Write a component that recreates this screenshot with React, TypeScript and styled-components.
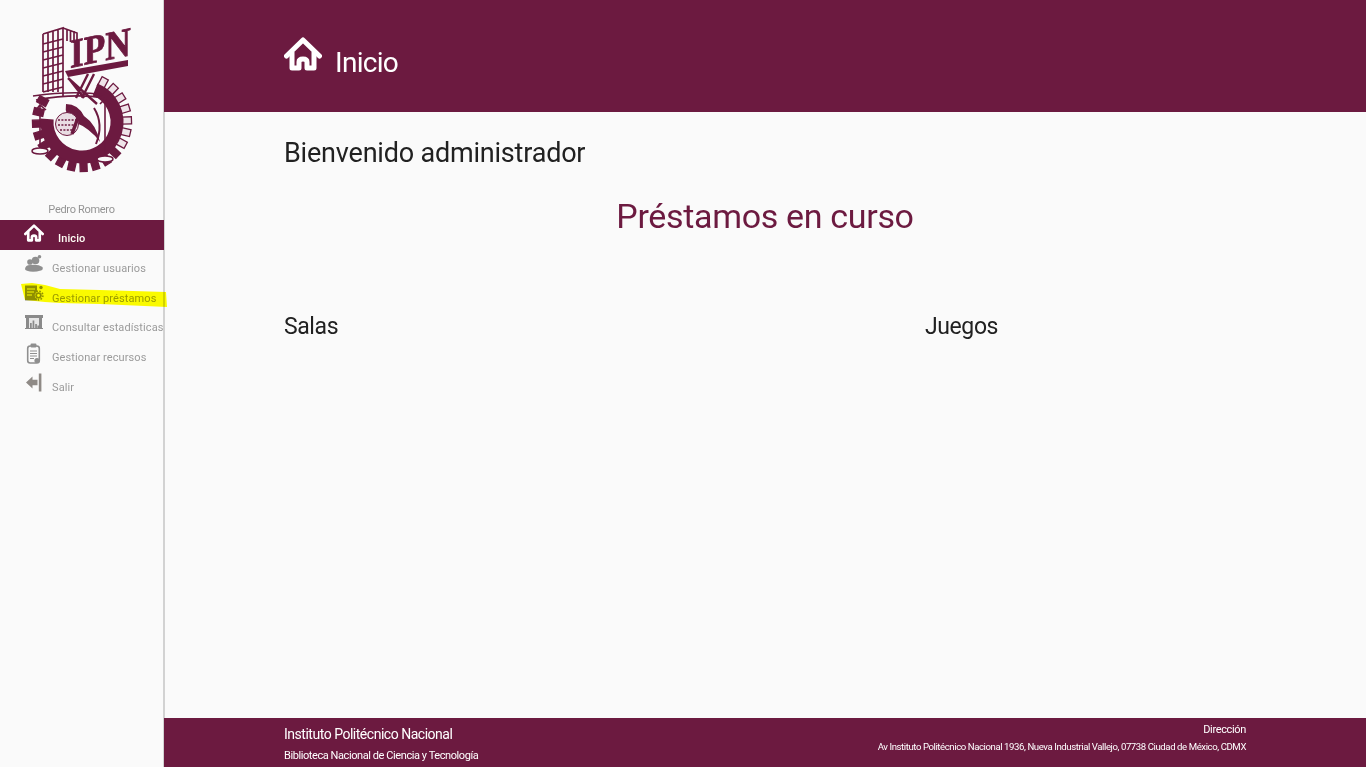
import React from "react";
import styled, { createGlobalStyle } from "styled-components";

const MAROON = "#6c1a40";

const Global = createGlobalStyle`
  html, body { margin: 0; padding: 0; height: 100%; background: #fafafa; }
  #root { height: 100%; }
  * { box-sizing: border-box; }
`;

const Page = styled.div`
  position: relative;
  display: grid;
  grid-template-columns: 165px 1fr;
  width: 100%;
  height: 767px;
  overflow: hidden;
  font-family: Roboto, "Liberation Sans", sans-serif;
  background: #fafafa;
  color: #212121;
`;

const Sidebar = styled.aside`
  display: flex;
  flex-direction: column;
  border-right: 2px solid #d2d2d2;
  background: #fafafa;
`;

const LogoBox = styled.div`
  display: flex;
  justify-content: center;
  height: 202px;
  padding-top: 20px;
  svg { filter: blur(0.35px); }
`;

const UserName = styled.div`
  height: 18px;
  font-size: 11px;
  line-height: 15px;
  letter-spacing: -0.3px;
  text-align: center;
  color: #949494;
`;

const Nav = styled.nav`
  display: flex;
  flex-direction: column;
`;

const NavItem = styled.a<{ $active?: boolean }>`
  display: flex;
  height: 29.8px;
  width: 164px;
  padding-left: 24px;
  background: ${(p) => (p.$active ? MAROON : "transparent")};
  color: ${(p) => (p.$active ? "#fffdf5" : "#9b9b9b")};
  font-size: 11px;
  font-weight: ${(p) => (p.$active ? 500 : 400)};
  letter-spacing: 0.1px;
  white-space: nowrap;
`;

const NavIcon = styled.span<{ $active?: boolean }>`
  display: block;
  width: 20px;
  height: 20px;
  margin-top: 4px;
  margin-right: ${(p) => (p.$active ? "14px" : "8px")};
  svg { display: block; }
`;

const NavLabel = styled.span`
  line-height: 38px;
`;

const Marker = styled.svg`
  position: absolute;
  left: 0;
  top: 280px;
  width: 170px;
  height: 30px;
  mix-blend-mode: multiply;
  pointer-events: none;
`;

const Main = styled.div`
  display: flex;
  flex-direction: column;
  min-width: 0;
`;

const Header = styled.header`
  display: flex;
  align-items: center;
  flex: 0 0 112px;
  margin-left: -1px;
  padding-left: 120px;
  background: ${MAROON};
  color: #fff;
`;

const HeaderIcon = styled.span`
  display: block;
  width: 38px;
  height: 34px;
  margin-right: 13px;
  margin-bottom: 4px;
  svg { display: block; }
`;

const HeaderTitle = styled.h1`
  margin: 14px 0 0;
  font-size: 28px;
  font-weight: 400;
  line-height: 36px;
  letter-spacing: -0.7px;
`;

const Content = styled.main`
  flex: 1;
  padding: 24px 120px 0 119px;
`;

const Welcome = styled.h2`
  margin: 0;
  font-size: 27px;
  font-weight: 400;
  line-height: 34px;
  letter-spacing: -0.2px;
`;

const SectionTitle = styled.h2`
  margin: 25px 0 0;
  font-size: 34px;
  font-weight: 400;
  line-height: 42px;
  letter-spacing: -0.33px;
  text-align: center;
  color: ${MAROON};
`;

const Columns = styled.div`
  display: grid;
  grid-template-columns: 641px 1fr;
  margin-top: 75px;
`;

const ColumnTitle = styled.h3`
  margin: 0;
  font-size: 23px;
  font-weight: 400;
  line-height: 30px;
  letter-spacing: -0.4px;
`;

const Footer = styled.footer`
  display: flex;
  justify-content: space-between;
  flex: 0 0 49px;
  margin-left: -1px;
  padding: 0 120px;
  background: ${MAROON};
  color: #fff;
`;

const FooterLeft = styled.div`
  display: flex;
  flex-direction: column;
`;

const FooterName = styled.div`
  margin-top: 7px;
  font-size: 14px;
  line-height: 18px;
  letter-spacing: -0.48px;
`;

const FooterSub = styled.div`
  margin-top: 5px;
  font-size: 11px;
  line-height: 15px;
  letter-spacing: -0.42px;
`;

const FooterRight = styled.div`
  display: flex;
  flex-direction: column;
  align-items: flex-end;
  font-size: 9.6px;
  line-height: 14px;
`;

const FooterLabel = styled.div`
  margin-top: 5px;
  font-size: 11px;
  letter-spacing: -0.35px;
`;

const FooterAddress = styled.div`
  margin-top: 3px;
  letter-spacing: -0.42px;
`;

const polar = (cx: number, cy: number, r: number, deg: number) => {
  const a = (deg * Math.PI) / 180;
  return [cx + r * Math.cos(a), cy + r * Math.sin(a)];
};

const Logo = () => {
  const cx = 82;
  const cy = 122;
  const teeth = Array.from({ length: 19 }, (_, i) => -62 + i * 15);
  const [sx, sy] = polar(cx, cy, 35, -68);
  const [ex, ey] = polar(cx, cy, 35, 185);
  const hLines = [0, 1, 2, 3, 4, 5, 6];
  return (
    <svg width="110" height="155" viewBox="27 20 110 155" fill="none">
      {teeth.map((d) => {
        const [x, y] = polar(cx, cy, 44.5, d);
        const pale = d < 40;
        return (
          <rect
            key={d}
            x={x - 5}
            y={y - 3.5}
            width="10"
            height="7"
            fill={pale ? "#efe4e9" : MAROON}
            stroke={MAROON}
            strokeWidth="1.3"
            transform={`rotate(${d} ${x} ${y})`}
          />
        );
      })}
      <path d={`M${sx} ${sy} A35 35 0 1 1 ${ex} ${ey}`} stroke={MAROON} strokeWidth="13" />
      <g stroke={MAROON} strokeWidth="1.7">
        <path d="M43 34 L63 28 V96 M43 34 V92 M48 33 V92 M53 31 V92 M58 30 V92" />
        {hLines.map((i) => (
          <path key={i} d={`M43 ${44 + i * 8} L63 ${39 + i * 8}`} />
        ))}
        <path d="M63 28 L77 33 V43 M67 29 V41 M70.5 30 V42 M74 31 V43" />
      </g>
      <text
        transform="translate(70 68) skewY(-12) scale(0.86 1)"
        fontFamily="'Liberation Serif', serif"
        fontWeight="700"
        fontSize="41"
        fill={MAROON}
        stroke={MAROON}
        strokeWidth="0.8"
      >
        IPN
      </text>
      <path d="M65 71 L128 60 V66 L68 77 Z" fill={MAROON} />
      <g stroke={MAROON}>
        <path d="M68 78 L97 104 M94 74 L82 98 M70 80 L84 98 M88 74 L76 98" strokeWidth="2.4" />
        <path d="M33 96 Q75 90 104 95 M36 100 Q75 93 104 98" strokeWidth="1.6" />
        <path d="M40 106 V150 M105 101 V158 M36 110 L40 105 L46 110 M100 104 L105 99 L111 105" strokeWidth="1.6" />
      </g>
      <path d="M66 104 Q78 104 84 116 Q96 124 100 142 Q90 128 74 122 Q64 116 66 104 Z" fill={MAROON} />
      <circle cx="67" cy="124" r="11.5" fill="#e9dde3" stroke={MAROON} strokeWidth="1" />
      <path d="M58 120 H76 M58 125 H76 M60 130 H74" stroke={MAROON} strokeWidth="1.4" strokeDasharray="2 1.4" />
      <path d="M80 112 L72 134" stroke={MAROON} strokeWidth="3.5" />
      <path d="M94 108 Q104 124 96 144" stroke={MAROON} strokeWidth="2" />
      <ellipse cx="40" cy="151" rx="8" ry="3" fill="#fafafa" stroke={MAROON} strokeWidth="1.5" />
      <ellipse cx="105" cy="159" rx="8" ry="3" fill="#fafafa" stroke={MAROON} strokeWidth="1.5" />
    </svg>
  );
};

const HomeShape = ({ w }: { w: number }) => (
  <svg width={w} height={(w * 34) / 38} viewBox="0 0 38 34" fill="none">
    <path d="M2.5 19 L19 3 L35.5 19" stroke="#fff" strokeWidth="5" strokeLinecap="round" strokeLinejoin="round" />
    <path d="M8 15 V31 H15 V25 Q15 22 19 22 Q23 22 23 25 V31 H30 V15" stroke="#fff" strokeWidth="5" strokeLinejoin="round" />
  </svg>
);

const UsersIcon = () => (
  <svg width="20" height="20" viewBox="0 0 20 20" fill="#8f8f8f">
    <circle cx="11.5" cy="6.5" r="3.8" />
    <circle cx="6" cy="8" r="2.8" />
    <circle cx="15.5" cy="2.8" r="1.8" />
    <path d="M1 15 Q1.5 10.8 6.5 11 Q14 10 18.5 13 Q19.5 15.5 17 16.5 Q9 18.8 3 16.8 Q1 16 1 15 Z" />
  </svg>
);

const LoansIcon = () => (
  <svg width="20" height="20" viewBox="0 0 20 20">
    <rect x="1" y="1.5" width="12" height="15" fill="#8f8f8f" />
    <path d="M3 5 H11 M3 8 H10 M3 11 H8" stroke="#fafafa" strokeWidth="1.2" />
    <circle cx="14.5" cy="11.5" r="3.6" fill="#8f8f8f" stroke="#fafafa" strokeWidth="0.6" />
    <circle cx="14.5" cy="11.5" r="4.4" fill="none" stroke="#8f8f8f" strokeWidth="1.6" strokeDasharray="1.6 1.4" />
    <circle cx="14.5" cy="11.5" r="1.4" fill="#fafafa" />
    <circle cx="17" cy="3.5" r="1.7" fill="#8f8f8f" />
  </svg>
);

const StatsIcon = () => (
  <svg width="20" height="20" viewBox="0 0 20 20" fill="#8a8a8a">
    <path d="M1 2 H19 V5 H18 V15 H19 V16 H1 V15 H2 V5 H1 Z" />
    <rect x="5" y="5" width="10" height="10" fill="#e6e6e6" />
    <rect x="6" y="10" width="1.7" height="5" />
    <rect x="8.6" y="7.5" width="1.7" height="7.5" />
    <rect x="11.2" y="11" width="1.7" height="4" />
    <rect x="13.4" y="12.5" width="1.6" height="2.5" />
  </svg>
);

const ClipIcon = () => (
  <svg width="20" height="22" viewBox="0 0 20 22" fill="none" stroke="#8f8f8f">
    <rect x="3.7" y="3" width="11.6" height="17" rx="2.5" strokeWidth="1.6" />
    <rect x="6.5" y="0.5" width="6" height="4" rx="1.2" fill="#8f8f8f" stroke="none" />
    <path d="M6 8 H13 M6 10.5 H13 M6 13 H13 M6 15.5 H10" strokeWidth="1.2" />
    <circle cx="13" cy="17.5" r="2.6" fill="#8f8f8f" stroke="none" />
  </svg>
);

const ExitIcon = () => (
  <svg width="20" height="20" viewBox="0 0 20 20" fill="#8f8a86">
    <path d="M2 9.5 L8.5 3.5 V6.8 H13.5 V12.2 H8.5 V15.5 Z" />
    <rect x="14.8" y="0.5" width="2.6" height="18" />
  </svg>
);

const items = [
  { label: "Gestionar usuarios", icon: <UsersIcon /> },
  { label: "Gestionar préstamos", icon: <LoansIcon /> },
  { label: "Consultar estadísticas", icon: <StatsIcon /> },
  { label: "Gestionar recursos", icon: <ClipIcon /> },
  { label: "Salir", icon: <ExitIcon /> },
];

export default function App() {
  return (
    <Page>
      <Global />
      <Sidebar>
        <LogoBox>
          <Logo />
        </LogoBox>
        <UserName>Pedro Romero</UserName>
        <Nav>
          <NavItem $active>
            <NavIcon $active>
              <HomeShape w={20} />
            </NavIcon>
            <NavLabel>Inicio</NavLabel>
          </NavItem>
          {items.map((it) => (
            <NavItem key={it.label}>
              <NavIcon>{it.icon}</NavIcon>
              <NavLabel>{it.label}</NavLabel>
            </NavItem>
          ))}
        </Nav>
      </Sidebar>
      <Main>
        <Header>
          <HeaderIcon>
            <HomeShape w={38} />
          </HeaderIcon>
          <HeaderTitle>Inicio</HeaderTitle>
        </Header>
        <Content>
          <Welcome>Bienvenido administrador</Welcome>
          <SectionTitle>Préstamos en curso</SectionTitle>
          <Columns>
            <ColumnTitle>Salas</ColumnTitle>
            <ColumnTitle>Juegos</ColumnTitle>
          </Columns>
        </Content>
        <Footer>
          <FooterLeft>
            <FooterName>Instituto Politécnico Nacional</FooterName>
            <FooterSub>Biblioteca Nacional de Ciencia y Tecnología</FooterSub>
          </FooterLeft>
          <FooterRight>
            <FooterLabel>Dirección</FooterLabel>
            <FooterAddress>Av Instituto Politécnico Nacional 1936, Nueva Industrial Vallejo, 07738 Ciudad de México, CDMX</FooterAddress>
          </FooterRight>
        </Footer>
      </Main>
      <Marker viewBox="0 0 170 30">
        <path d="M21 4 L32 3 L45 5 L60 9 L100 10 L166 12 L167 27 L100 24 L60 23 L45 22 L25 20 Z" fill="#ffff00" />
      </Marker>
    </Page>
  );
}
